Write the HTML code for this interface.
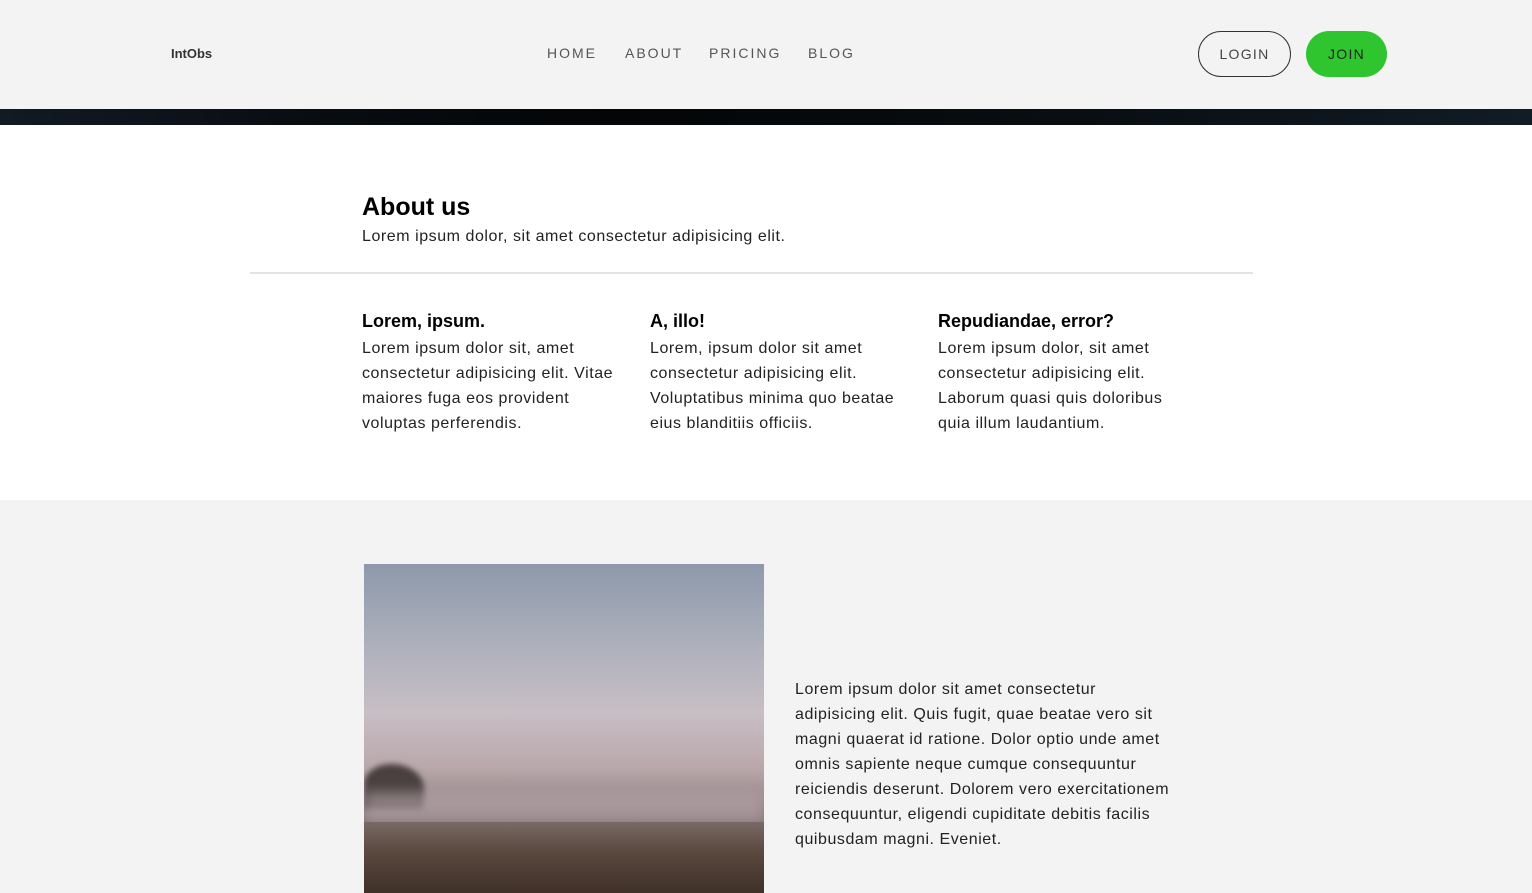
<!DOCTYPE html>
<html><head><meta charset="utf-8"><style>
*{margin:0;padding:0;box-sizing:border-box}
body{width:1532px;height:893px;overflow:hidden;background:#f3f3f3;font-family:"Liberation Sans",sans-serif;color:#222}
.hdr{position:absolute;top:0;left:0;width:1532px;height:109px;background:#f3f3f3}
.logo{position:absolute;left:171px;top:46px;font-size:13px;font-weight:bold;color:#333}
.nav{position:absolute;top:45px;font-size:14px;letter-spacing:2px;color:#555}
.btn{position:absolute;top:31px;height:46px;border-radius:23px;font-size:14px;letter-spacing:1.3px;display:flex;align-items:center;justify-content:center}
.strip{position:absolute;top:109px;left:0;width:1532px;height:16px;background:linear-gradient(90deg,#121a22,#080d12 20%,#030506 40%,#080e12 70%,#121c24)}
.white{position:absolute;top:125px;left:0;width:1532px;height:375px;background:#fff}
h1{position:absolute;left:362px;top:193px;font-size:25px;font-weight:bold;color:#000}
.p{font-size:16px;line-height:25px;letter-spacing:0.55px;color:#222}
.hr{position:absolute;left:250px;top:272px;width:1003px;height:2px;background:#e3e3e3}
.col{position:absolute;top:311px}
.col h3{font-size:18px;font-weight:bold;color:#000;height:25px}
.img{position:absolute;left:364px;top:564px;width:400px;height:329px;background:linear-gradient(180deg,#8d99ab 0%,#aeb0bc 25%,#c8bec4 45%,#b9a8ab 62%,#8f7e80 75%,#6f6362 85%,#4e3f38 100%);overflow:hidden}
</style></head><body>
<div class="hdr">
<div class="logo">IntObs</div>
<div class="nav" style="left:547px">HOME</div>
<div class="nav" style="left:625px">ABOUT</div>
<div class="nav" style="left:709px">PRICING</div>
<div class="nav" style="left:808px">BLOG</div>
<div class="btn" style="left:1198px;width:93px;border:1px solid #333;color:#444">LOGIN</div>
<div class="btn" style="left:1306px;width:81px;background:#2ec52e;color:#222">JOIN</div>
</div>
<div class="strip"></div>
<div class="white"></div>
<h1>About us</h1>
<div class="p" style="position:absolute;left:362px;top:224px">Lorem ipsum dolor, sit amet consectetur adipisicing elit.</div>
<div class="hr"></div>
<div class="col" style="left:362px"><h3>Lorem, ipsum.</h3><div class="p">Lorem ipsum dolor sit, amet<br>consectetur adipisicing elit. Vitae<br>maiores fuga eos provident<br>voluptas perferendis.</div></div>
<div class="col" style="left:650px"><h3>A, illo!</h3><div class="p">Lorem, ipsum dolor sit amet<br>consectetur adipisicing elit.<br>Voluptatibus minima quo beatae<br>eius blanditiis officiis.</div></div>
<div class="col" style="left:938px"><h3>Repudiandae, error?</h3><div class="p">Lorem ipsum dolor, sit amet<br>consectetur adipisicing elit.<br>Laborum quasi quis doloribus<br>quia illum laudantium.</div></div>
<div class="img">
<div style="position:absolute;left:0;top:200px;width:60px;height:45px;background:#4a4040;border-radius:50% 60% 10% 0;filter:blur(3px)"></div>
<div style="position:absolute;left:0;top:228px;width:400px;height:30px;background:rgba(180,165,170,.6);filter:blur(6px)"></div>
<div style="position:absolute;left:0;top:258px;width:400px;height:71px;background:linear-gradient(180deg,#7a6a66,#5a4a40 40%,#3f3028)"></div>
</div>
<div class="p" style="position:absolute;left:795px;top:677px">Lorem ipsum dolor sit amet consectetur<br>adipisicing elit. Quis fugit, quae beatae vero sit<br>magni quaerat id ratione. Dolor optio unde amet<br>omnis sapiente neque cumque consequuntur<br>reiciendis deserunt. Dolorem vero exercitationem<br>consequuntur, eligendi cupiditate debitis facilis<br>quibusdam magni. Eveniet.</div>
</body></html>
